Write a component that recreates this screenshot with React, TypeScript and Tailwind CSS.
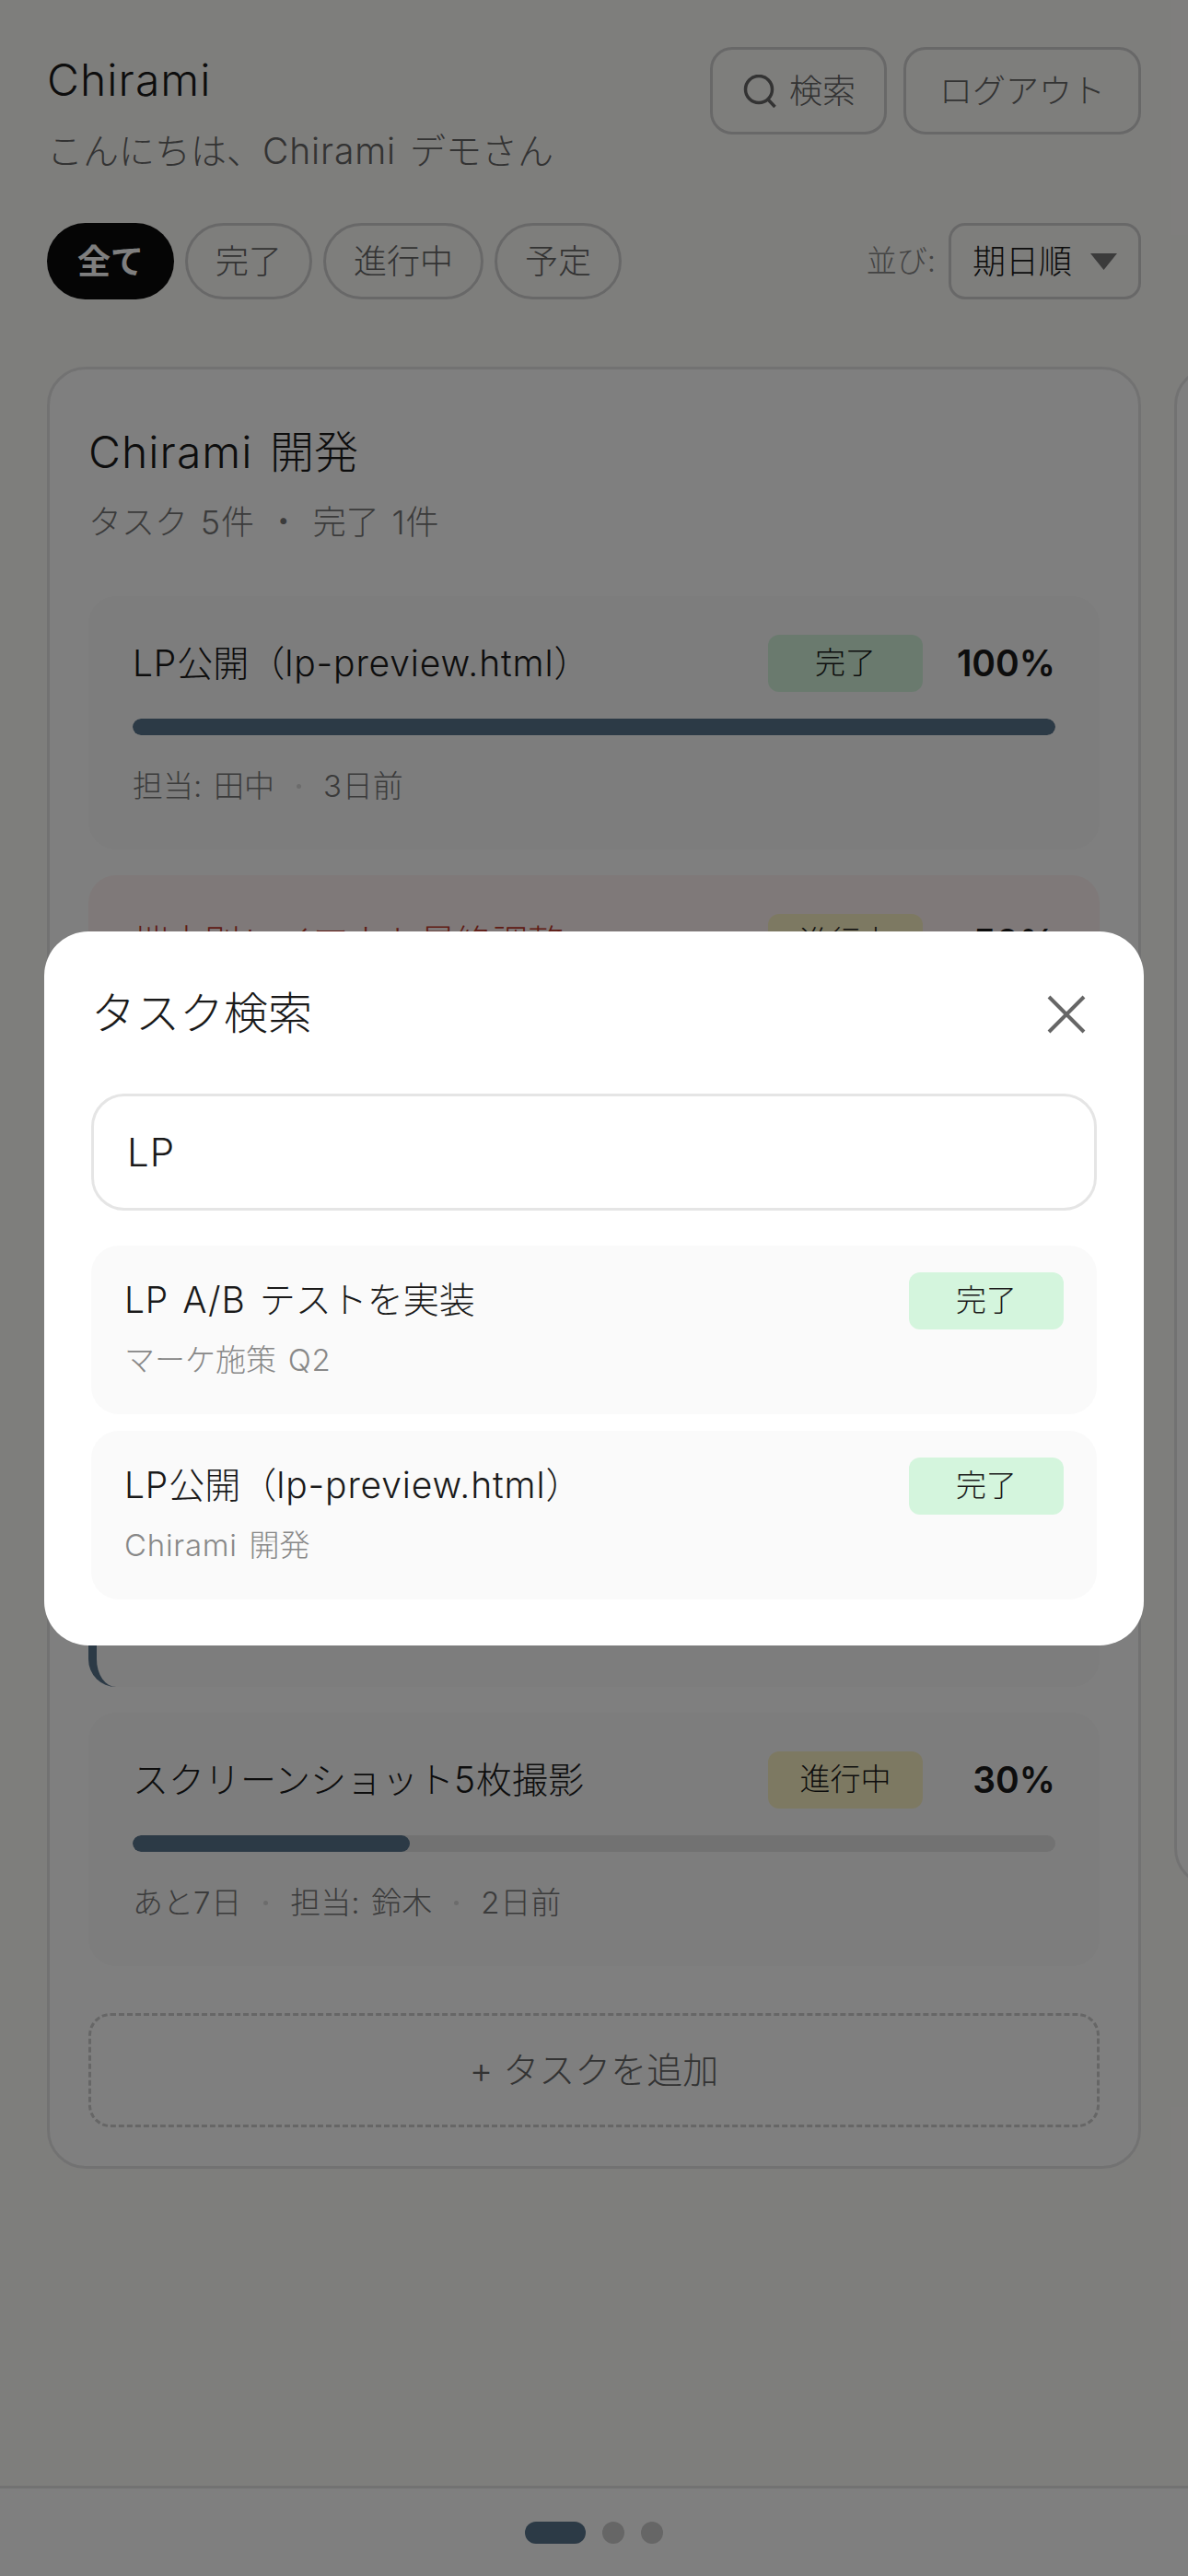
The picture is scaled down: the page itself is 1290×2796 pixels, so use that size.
// App.tsx
import React from "react";

type Status = "done" | "doing";

type Task = {
  title: string;
  status: Status;
  percent: number;
  meta: string[];
  urgent?: boolean;
  accent?: boolean;
};

const tasks: Task[] = [
  { title: "LP公開（lp-preview.html）", status: "done", percent: 100, meta: ["担当: 田中", "3日前"] },
  { title: "端末別レイアウト最終調整", status: "doing", percent: 50, meta: ["期限超過", "担当: 田中", "1日前"], urgent: true },
  { title: "ストア掲載文の作成", status: "doing", percent: 60, meta: ["あと3日", "担当: 佐藤", "1日前"] },
  { title: "審査用アカウントの準備", status: "doing", percent: 40, meta: ["あと5日", "担当: 鈴木", "今日"], accent: true },
  { title: "スクリーンショット5枚撮影", status: "doing", percent: 30, meta: ["あと7日", "担当: 鈴木", "2日前"] },
];

const results = [
  { title: "LP A/B テストを実装", project: "マーケ施策 Q2" },
  { title: "LP公開（lp-preview.html）", project: "Chirami 開発" },
];

// latin runs sit a little wider than Inter's default
const Txt: React.FC<{ children: string }> = ({ children }) => (
  <>
    {children.split(/([A-Za-z0-9.\-/ ]+)/).map((part, i) =>
      part ? (
        <span key={i} className={i % 2 ? "tracking-[0.022em] [word-spacing:0.08em]" : ""}>
          {part}
        </span>
      ) : null,
    )}
  </>
);

const StatusChip: React.FC<{ status: Status }> = ({ status }) => (
  <span
    className={`flex h-[62px] w-[168px] shrink-0 items-center justify-center rounded-[12px] text-[33px] text-[#1a1a1a] ${
      status === "done" ? "bg-[#d4f5dd]" : "bg-[#fbf3c4]"
    }`}
  >
    {status === "done" ? "完了" : "進行中"}
  </span>
);

const TaskCard: React.FC<{ task: Task }> = ({ task }) => (
  <div
    className={`h-[275px] rounded-[30px] px-[48px] pt-[42px] ${task.urgent ? "bg-[#fef3f2]" : "bg-[#fafafa]"} ${
      task.accent ? "border-l-[9px] border-[#58748c]" : ""
    }`}
  >
    <div className="flex items-center">
      <div className={`flex-1 truncate text-[39px] ${task.urgent ? "text-[#c0392b]" : "text-[#1a1a1a]"}`}>
        <Txt>{task.title}</Txt>
      </div>
      <StatusChip status={task.status} />
      <div className="w-[144px] text-right text-[39px] font-semibold text-[#1a1a1a]">{task.percent}%</div>
    </div>
    <div className="mt-[29px] h-[18px] overflow-hidden rounded-full bg-[#e5e5e5]">
      <div className="h-full rounded-full bg-[#58748c]" style={{ width: `${task.percent}%` }} />
    </div>
    <div className="mt-[31px] flex items-center gap-[24px] text-[33px] text-[#777777]">
      {task.meta.map((item, i) => (
        <React.Fragment key={item}>
          {i > 0 && <span className="h-[5px] w-[5px] rounded-full bg-[#d8d8d8]" />}
          <span>
            <Txt>{item}</Txt>
          </span>
        </React.Fragment>
      ))}
    </div>
  </div>
);

export default function App() {
  return (
    <div className="relative flex h-[2796px] w-[1290px] flex-col overflow-hidden bg-[#fdfcf9] font-['Inter','Noto_Sans_CJK_JP',sans-serif] font-light">
      <main className="flex-1 overflow-hidden px-[51px] pt-[51px]">
        {/* Header */}
        <div className="flex items-start justify-between">
          <div>
            <h1 className="text-[48px] leading-[72px] text-[#1a1a1a]">
              <Txt>Chirami</Txt>
            </h1>
            <p className="mt-[12px] text-[39px] leading-[58px] text-[#666666]">
              <Txt>こんにちは、Chirami デモさん</Txt>
            </p>
          </div>
          <div className="flex gap-[18px]">
            <button className="flex h-[95px] items-center gap-[14px] rounded-[24px] border-[3px] border-[#d0d0d0] pl-[33px] pr-[31px] text-[36px] text-[#666666]">
              <svg width="36" height="36" viewBox="0 0 36 36" fill="none" stroke="currentColor" strokeWidth="3.5">
                <circle cx="17" cy="16" r="14.5" />
                <path d="M27 27l7.5 8" />
              </svg>
              検索
            </button>
            <button className="h-[95px] rounded-[24px] border-[3px] border-[#d0d0d0] px-[36px] text-[36px] text-[#666666]">ログアウト</button>
          </div>
        </div>

        {/* Filters */}
        <div className="mt-[49px] flex items-center">
          <div className="flex gap-[12px]">
            <button className="h-[83px] rounded-full bg-[#0a0a0a] px-[33px] text-[36px] font-bold text-white">全て</button>
            {["完了", "進行中", "予定"].map((label) => (
              <button key={label} className="h-[83px] rounded-full border-[3px] border-[#d0d0d0] px-[30px] text-[36px] text-[#666666]">
                {label}
              </button>
            ))}
          </div>
          <div className="ml-auto flex items-center gap-[14px]">
            <span className="text-[33px] text-[#888888]">並び:</span>
            <div className="flex h-[83px] w-[209px] items-center gap-[20px] rounded-[18px] border-[3px] border-[#d0d0d0] pl-[23px] text-[36px] text-[#1a1a1a]">
              期日順
              <svg width="29" height="18" viewBox="0 0 29 18" className="text-[#777777]">
                <path d="M0 0h29L14.5 18z" fill="currentColor" />
              </svg>
            </div>
          </div>
        </div>

        {/* Project cards */}
        <div className="mt-[73px] flex items-start gap-[36px]">
          <section className="w-[1188px] shrink-0 rounded-[42px] border-[3px] border-[#e5e5e5] bg-white px-[42px] pb-[42px] pt-[54px]">
            <h2 className="text-[48px] leading-[72px] text-[#1a1a1a]">
              <Txt>Chirami 開発</Txt>
            </h2>
            <p className="mt-[13px] text-[36px] leading-[54px] text-[#777777]">
              <Txt>タスク 5件 ・ 完了 1件</Txt>
            </p>
            <div className="mt-[53px] flex flex-col gap-[28px]">
              {tasks.map((task) => (
                <TaskCard key={task.title} task={task} />
              ))}
            </div>
            <button className="mt-[51px] h-[124px] w-full rounded-[24px] border-[3px] border-dashed border-[#cccccc] text-[39px] text-[#666666]">
              + タスクを追加
            </button>
          </section>
          <section className="h-[1650px] w-[1188px] shrink-0 rounded-[42px] border-[3px] border-[#e5e5e5] bg-white" />
        </div>
      </main>

      {/* Pager */}
      <footer className="flex h-[98px] items-center justify-center gap-[18px] border-t-[3px] border-[#e5e5e5] bg-white">
        <span className="h-[24px] w-[66px] rounded-full bg-[#58748c]" />
        <span className="h-[24px] w-[24px] rounded-full bg-[#cccccc]" />
        <span className="h-[24px] w-[24px] rounded-full bg-[#cccccc]" />
      </footer>

      {/* Search dialog */}
      <div className="absolute inset-0 flex items-center justify-center bg-black/50">
        <div className="w-[1194px] rounded-[48px] bg-white px-[51px] pb-[50px] pt-[53px]">
          <div className="flex items-center justify-between">
            <h2 className="text-[48px] leading-[72px] text-[#1a1a1a]">タスク検索</h2>
            <svg width="42" height="42" viewBox="0 0 42 42" stroke="#666666" strokeWidth="4" className="mr-[12px] mt-[3px]">
              <path d="M2 2l38 38M40 2L2 40" />
            </svg>
          </div>
          <div className="mt-[51px] flex h-[127px] items-center rounded-[36px] border-[3px] border-[#e5e5e5] px-[36px] text-[42px] text-[#1a1a1a]">
            <Txt>LP</Txt>
          </div>
          <div className="mt-[38px] flex flex-col gap-[18px]">
            {results.map((r) => (
              <div key={r.title} className="h-[183px] rounded-[30px] bg-[#fafafa] px-[36px] pt-[29px]">
                <div className="flex items-center justify-between">
                  <span className="text-[39px] text-[#1a1a1a]">
                    <Txt>{r.title}</Txt>
                  </span>
                  <StatusChip status="done" />
                </div>
                <div className="mt-[9px] text-[33px] text-[#888888]">
                  <Txt>{r.project}</Txt>
                </div>
              </div>
            ))}
          </div>
        </div>
      </div>
    </div>
  );
}
